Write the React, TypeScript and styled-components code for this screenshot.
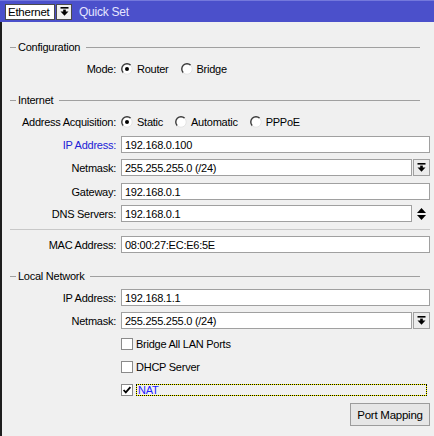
import React from "react";
import styled, { createGlobalStyle } from "styled-components";

const Global = createGlobalStyle`
  html, body { margin: 0; padding: 0; background: #f0f0f0; }
  body { font-family: "Liberation Sans", Arial, sans-serif; font-size: 11px; letter-spacing: -0.25px; color: #000; }
`;

const Window = styled.div`
  width: 434px;
  height: 436px;
  overflow: hidden;
  background: #f0f0f0;
  display: flex;
  flex-direction: column;
`;

const TitleBar = styled.div`
  height: 22px;
  box-sizing: border-box;
  background: #4b50cb;
  border-top: 1px solid #7478dc;
  display: flex;
  align-items: center;
  padding-left: 5px;
  flex-shrink: 0;
`;

const SelectBox = styled.div`
  width: 50px;
  height: 16px;
  box-sizing: border-box;
  background: #fff;
  border: 1px solid #4a4a4a;
  display: flex;
  align-items: center;
  padding-left: 2px;
  font-size: 11.5px;
`;

const TitleBtn = styled.div`
  width: 16px;
  height: 16px;
  margin-left: 1px;
  box-sizing: border-box;
  background: #f0f0f0;
  border: 1px solid #4a4a4a;
  display: flex;
  align-items: center;
  justify-content: center;
`;

const Title = styled.div`
  margin-left: 7px;
  color: #e6e6ff;
  font-size: 12px;
`;

const Body = styled.div`
  flex: 1;
  border-left: 2px solid #1e1e1e;
  display: flex;
  flex-direction: column;
  padding-right: 4px;
`;

const SectionHeader = styled.div<{ $mt: number }>`
  height: 14px;
  margin-top: ${(p) => p.$mt}px;
  display: flex;
  align-items: center;
  margin-right: 10px;
  &::before {
    content: "";
    width: 6px;
    height: 1px;
    background: #a0a0a0;
    margin-left: 8px;
    margin-right: 2px;
  }
  &::after {
    content: "";
    flex: 1;
    height: 1px;
    background: #a0a0a0;
    margin-left: 6px;
  }
`;

const Row = styled.div<{ $mt: number; $h: number }>`
  height: ${(p) => p.$h}px;
  margin-top: ${(p) => p.$mt}px;
  display: grid;
  grid-template-columns: 114px 1fr;
  column-gap: 5px;
  align-items: center;
`;

const Label = styled.div<{ $blue?: boolean }>`
  text-align: right;
  color: ${(p) => (p.$blue ? "#2121d6" : "#000")};
  white-space: nowrap;
`;

const Controls = styled.div`
  display: flex;
  align-items: center;
  height: 100%;
  min-width: 0;
`;

const Input = styled.div`
  flex: 1;
  height: 17px;
  box-sizing: border-box;
  background: #fff;
  border: 1px solid #a0a0a0;
  display: flex;
  align-items: center;
  padding-left: 3px;
`;

const SideBtn = styled.div`
  width: 17px;
  height: 17px;
  margin-left: 1px;
  box-sizing: border-box;
  background: #ececec;
  border: 1px solid #a0a0a0;
  display: flex;
  align-items: center;
  justify-content: center;
`;

const SideSpin = styled.div`
  width: 18px;
  height: 17px;
  display: flex;
  align-items: center;
  justify-content: center;
`;

const Separator = styled.div`
  height: 1px;
  background: #c8c8c8;
  margin-top: 7px;
  margin-left: 8px;
`;

const Choice = styled.label`
  display: flex;
  align-items: center;
  margin-right: 12px;
  white-space: nowrap;
  svg { margin-right: 4px; flex-shrink: 0; }
`;

const Check = styled.div<{ $focus?: boolean }>`
  display: flex;
  align-items: center;
  flex: ${(p) => (p.$focus ? 1 : "none")};
  height: 100%;
`;

const CheckText = styled.span<{ $focus?: boolean }>`
  margin-left: 3px;
  ${(p) =>
    p.$focus
      ? `flex: 1;
         height: 12px;
         box-sizing: border-box;
         line-height: 10px;
         padding-left: 1px;
         color: #1f1fff;
         border: 1px dotted #000;
         margin-right: 3px;
         background: linear-gradient(#f0f0f0, #f0f0f0) padding-box, #ffff00 border-box;`
      : ""}
`;

const ButtonRow = styled.div`
  display: flex;
  justify-content: flex-end;
  margin-top: 5px;
`;

const Button = styled.div`
  width: 80px;
  height: 23px;
  box-sizing: border-box;
  border: 1px solid #9c9c9c;
  background: #e6e6e6;
  display: flex;
  align-items: center;
  justify-content: center;
  font-size: 11.5px;
`;

const DropIcon = () => (
  <svg width="9" height="9" viewBox="0 0 9 9">
    <rect x="0.5" y="0" width="8" height="1.6" fill="#000" />
    <rect x="3.2" y="2.6" width="2.6" height="2.4" fill="#000" />
    <polygon points="0.5,4.6 8.5,4.6 4.5,8.8" fill="#000" />
  </svg>
);

const SpinIcon = () => (
  <svg width="9" height="12" viewBox="0 0 9 12">
    <polygon points="4.5,0 9,5 0,5" fill="#000" />
    <polygon points="0,7 9,7 4.5,12" fill="#000" />
  </svg>
);

const Radio = ({ on }: { on?: boolean }) => (
  <svg width="12" height="12" viewBox="0 0 12 12">
    <circle cx="6" cy="6" r="5.2" fill="#fff" />
    <path d="M2.3 9.7 A5.2 5.2 0 0 1 9.7 2.3" fill="none" stroke="#3a3a3a" strokeWidth="1.4" />
    <path d="M9.7 2.3 A5.2 5.2 0 0 1 2.3 9.7" fill="none" stroke="#e4e4e4" strokeWidth="1" />
    {on && <circle cx="6" cy="6" r="2" fill="#000" />}
  </svg>
);

const CheckBox = ({ on }: { on?: boolean }) => (
  <svg width="12" height="12" viewBox="0 0 12 12">
    <rect x="0.5" y="0.5" width="11" height="11" fill="#fff" stroke="#8a8a8a" />
    {on && <path d="M2.6 6 L4.8 8.4 L9.4 3.2" fill="none" stroke="#000" strokeWidth="1.8" />}
  </svg>
);

const Field = ({ label, value, blue, side, mt }: { label: string; value: string; blue?: boolean; side?: "drop" | "spin"; mt: number }) => (
  <Row $mt={mt} $h={17}>
    <Label $blue={blue}>{label}</Label>
    <Controls>
      <Input>{value}</Input>
      {side === "drop" && (
        <SideBtn>
          <DropIcon />
        </SideBtn>
      )}
      {side === "spin" && (
        <SideSpin>
          <SpinIcon />
        </SideSpin>
      )}
    </Controls>
  </Row>
);

const CheckRow = ({ text, on, focus, mt }: { text: string; on?: boolean; focus?: boolean; mt: number }) => (
  <Row $mt={mt} $h={16}>
    <span />
    <Controls>
      <Check $focus={focus}>
        <CheckBox on={on} />
        <CheckText $focus={focus}>{text}</CheckText>
      </Check>
    </Controls>
  </Row>
);

export default function App() {
  return (
    <>
      <Global />
      <Window>
        <TitleBar>
          <SelectBox>Ethernet</SelectBox>
          <TitleBtn>
            <DropIcon />
          </TitleBtn>
          <Title>Quick Set</Title>
        </TitleBar>
        <Body>
          <SectionHeader $mt={18}>Configuration</SectionHeader>
          <Row $mt={7} $h={16}>
            <Label>Mode:</Label>
            <Controls>
              <Choice><Radio on />Router</Choice>
              <Choice><Radio />Bridge</Choice>
            </Controls>
          </Row>

          <SectionHeader $mt={16}>Internet</SectionHeader>
          <Row $mt={7} $h={16}>
            <Label>Address Acquisition:</Label>
            <Controls>
              <Choice><Radio on />Static</Choice>
              <Choice><Radio />Automatic</Choice>
              <Choice><Radio />PPPoE</Choice>
            </Controls>
          </Row>
          <Field mt={6} label="IP Address:" value="192.168.0.100" blue />
          <Field mt={6} label="Netmask:" value="255.255.255.0 (/24)" side="drop" />
          <Field mt={7} label="Gateway:" value="192.168.0.1" />
          <Field mt={5} label="DNS Servers:" value="192.168.0.1" side="spin" />
          <Separator />
          <Field mt={6} label="MAC Address:" value="08:00:27:EC:E6:5E" />

          <SectionHeader $mt={16}>Local Network</SectionHeader>
          <Field mt={6} label="IP Address:" value="192.168.1.1" />
          <Field mt={6} label="Netmask:" value="255.255.255.0 (/24)" side="drop" />
          <CheckRow mt={7} text="Bridge All LAN Ports" />
          <CheckRow mt={7} text="DHCP Server" />
          <CheckRow mt={7} text="NAT" on focus />
          <ButtonRow>
            <Button>Port Mapping</Button>
          </ButtonRow>
        </Body>
      </Window>
    </>
  );
}
